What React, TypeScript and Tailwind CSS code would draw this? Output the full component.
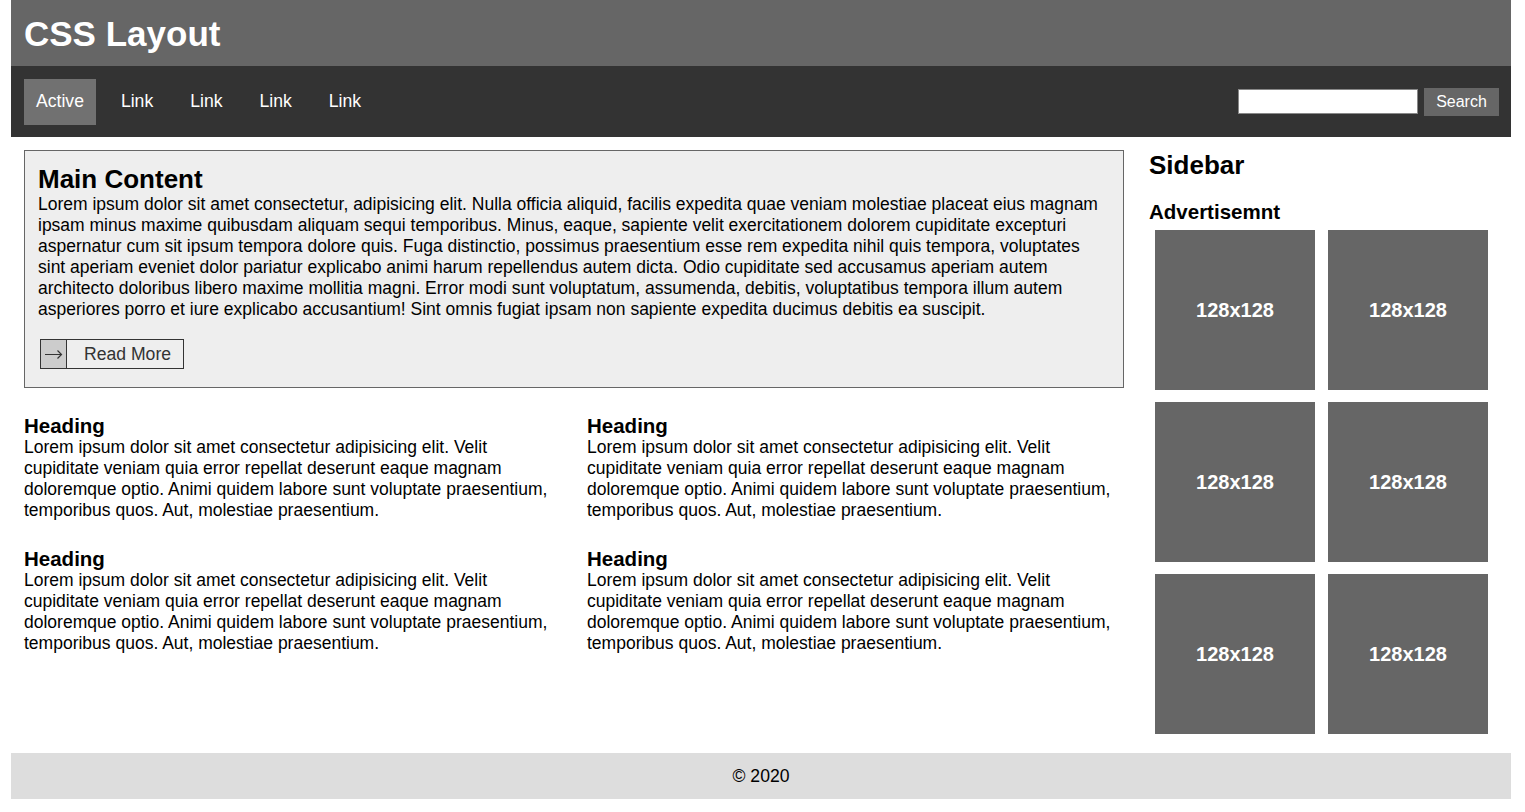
const lorem =
  'Lorem ipsum dolor sit amet consectetur, adipisicing elit. Nulla officia aliquid, facilis expedita quae veniam molestiae placeat eius magnam ipsam minus maxime quibusdam aliquam sequi temporibus. Minus, eaque, sapiente velit exercitationem dolorem cupiditate excepturi aspernatur cum sit ipsum tempora dolore quis. Fuga distinctio, possimus praesentium esse rem expedita nihil quis tempora, voluptates sint aperiam eveniet dolor pariatur explicabo animi harum repellendus autem dicta. Odio cupiditate sed accusamus aperiam autem architecto doloribus libero maxime mollitia magni. Error modi sunt voluptatum, assumenda, debitis, voluptatibus tempora illum autem asperiores porro et iure explicabo accusantium! Sint omnis fugiat ipsam non sapiente expedita ducimus debitis ea suscipit.'

const short =
  'Lorem ipsum dolor sit amet consectetur adipisicing elit. Velit cupiditate veniam quia error repellat deserunt eaque magnam doloremque optio. Animi quidem labore sunt voluptate praesentium, temporibus quos. Aut, molestiae praesentium.'

const links = ['Link', 'Link', 'Link', 'Link']

export default function App() {
  return (
    <div className="bg-white min-h-screen font-['Liberation_Sans',Arial,sans-serif] text-black">
      <div className="ml-[11px] w-[1500px]">
        {/* header */}
        <header className="h-[66px] bg-[#666] flex items-center px-[13px]">
          <h1 className="text-[35px] font-bold text-white leading-none">CSS Layout</h1>
        </header>

        {/* nav */}
        <nav className="h-[71px] bg-[#333] flex items-center justify-between pl-[13px] pr-[12px]">
          <ul className="flex items-center gap-[13px]">
            <li className="bg-[#717171] text-white text-[17.6px] px-[12px] h-[46px] flex items-center">Active</li>
            {links.map((l, i) => (
              <li key={i} className="text-white text-[17.6px] px-[12px] h-[46px] flex items-center">
                {l}
              </li>
            ))}
          </ul>
          <div className="flex items-center gap-[6px]">
            <input type="text" className="w-[180px] h-[25px] bg-white border border-[#888] outline-none" />
            <button className="w-[75px] h-[28px] bg-[#666] text-white text-[16px]">Search</button>
          </div>
        </nav>

        <div className="flex">
          {/* main */}
          <main className="w-[1126px] p-[13px]">
            <section className="bg-[#eee] border border-[#666] px-[13px] pt-[13px] pb-[18px]">
              <h2 className="text-[26px] font-bold leading-[30px]">Main Content</h2>
              <p className="text-[17.5px] leading-[21px]">{lorem}</p>
              <button className="ml-[2px] mt-[19px] flex items-stretch h-[30px] border border-[#333] text-[17.6px] text-[#333]">
                <span className="w-[26px] bg-[#ccc] border-r border-[#333] flex items-center justify-center">
                  <svg width="18" height="10" viewBox="0 0 18 10" fill="none" stroke="#333" strokeWidth="1.2">
                    <path d="M0 5.5h16.5M12.5 1.5l4 4-4 4" />
                  </svg>
                </span>
                <span className="pl-[17px] pr-[12px] flex items-center">Read More</span>
              </button>
            </section>

            <div className="grid grid-cols-2 gap-x-[26px] gap-y-[26px] mt-[26px]">
              {[0, 1, 2, 3].map((i) => (
                <div key={i}>
                  <h3 className="text-[20.5px] font-bold leading-[23px]">Heading</h3>
                  <p className="text-[17.5px] leading-[21px]">{short}</p>
                </div>
              ))}
            </div>
          </main>

          {/* sidebar */}
          <aside className="w-[374px] pt-[13px] pl-[12px]">
            <h2 className="text-[26px] font-bold leading-[30px]">Sidebar</h2>
            <h3 className="text-[20.5px] font-bold leading-[23px] mt-[20px]">Advertisemnt</h3>
            <div className="ml-[6px] mt-[7px] grid grid-cols-[160px_160px] gap-x-[13px] gap-y-[12px]">
              {[0, 1, 2, 3, 4, 5].map((i) => (
                <div
                  key={i}
                  className="w-[160px] h-[160px] bg-[#666] text-white text-[20px] font-bold flex items-center justify-center"
                >
                  128x128
                </div>
              ))}
            </div>
          </aside>
        </div>

        {/* footer */}
        <footer className="mt-[19px] h-[46px] bg-[#ddd] flex items-center justify-center text-[17.6px]">
          © 2020
        </footer>
      </div>
    </div>
  )
}
